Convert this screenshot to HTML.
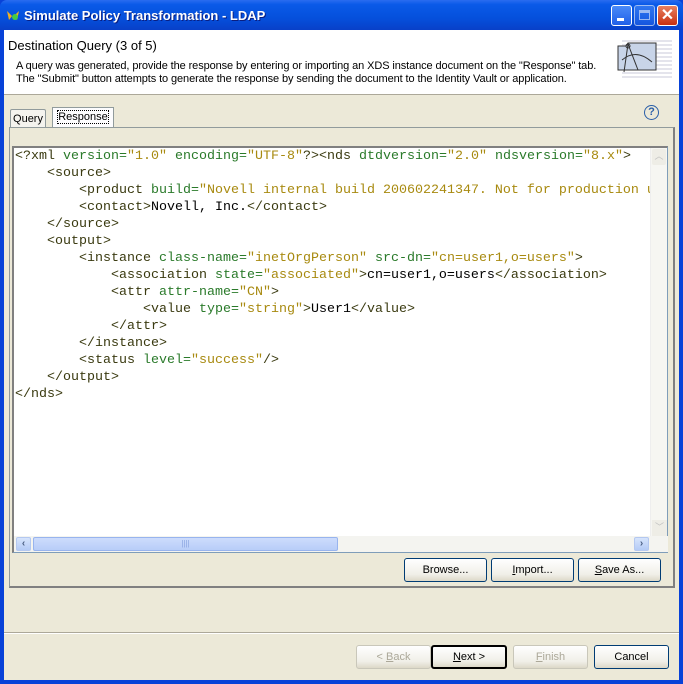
<!DOCTYPE html>
<html><head><style>
*{margin:0;padding:0;box-sizing:border-box}
body{width:683px;height:684px;overflow:hidden;background:#0842d8;font-family:"Liberation Sans",sans-serif;font-size:11px;position:relative}
.abs{position:absolute}
#title{left:0;top:0;width:683px;height:30px;background:linear-gradient(#2a6cf0 0%,#0a5ae8 15%,#0550dc 60%,#0840c8 100%);border-radius:7px 7px 0 0}
#title span{position:absolute;left:24px;top:8px;color:#fff;font-weight:bold;font-size:13px;text-shadow:1px 1px #0a1e80}
.wb{position:absolute;top:5px;width:21px;height:21px;border:1px solid #fff;border-radius:3px;background:linear-gradient(#4a8af8,#2060e8)}
#client{left:4px;top:30px;width:675px;height:650px;background:#ece9d8}
#hdr{left:0;top:0;width:675px;height:65px;background:#fff;border-bottom:1px solid #aca899}
.btn{position:absolute;height:24px;border:1px solid #003c74;border-radius:3px;background:linear-gradient(#fff,#f0efe8 70%,#dcd8c8);text-align:center;line-height:22px;font-size:11px;color:#000}
.dis{color:#aca899;border-color:#c9c7ba}
#ed{left:8px;top:116px;width:656px;height:407px;background:#fff;border:1px solid #7f9db9;border-left:2px solid #808080;border-top:2px solid #808080}
pre{position:absolute;left:1px;top:0px;font-family:"Liberation Mono",monospace;font-size:13.33px;line-height:17px;color:#000;white-space:pre}
.t{color:#3a3a10}.a{color:#2a7a2a}.v{color:#a88a10}
</style></head><body>
<div id="title" class="abs">
<svg class="abs" style="left:6px;top:9px" width="14" height="12"><path d="M1 2 L6 7 L3 11 Z" fill="#f0b020"/><path d="M13 2 L8 7 L11 11Z" fill="#f0b020"/><circle cx="9" cy="8" r="3" fill="#4c4"/></svg>
<span>Simulate Policy Transformation - LDAP</span>
<div class="wb" style="left:611px"><div style="position:absolute;left:5px;top:12px;width:7px;height:3px;background:#fff"></div></div>
<div class="wb" style="left:634px;opacity:.6"><div style="position:absolute;left:4px;top:4px;width:11px;height:10px;border:1px solid #fff;border-top-width:3px"></div></div>
<div class="wb" style="left:657px;background:linear-gradient(#e88060,#c83010);color:#fff;font-size:16px;font-weight:bold;text-align:center;line-height:19px">✕</div>
</div>
<div id="client" class="abs">
<div id="hdr" class="abs">
<div class="abs" style="left:4px;top:8px;font-size:13px;color:#000">Destination Query (3 of 5)</div>
<div class="abs" style="left:12px;top:30px;font-size:11px;line-height:13px;color:#000;letter-spacing:-0.1px">A query was generated, provide the response by entering or importing an XDS instance document on the "Response" tab.<br>The "Submit" button attempts to generate the response by sending the document to the Identity Vault or application.</div>
<div class="abs" style="left:618px;top:8px;width:50px;height:40px;background:repeating-linear-gradient(#fff 0 2px,#e4e4ec 2px 4px)"></div>
<svg class="abs" style="left:612px;top:10px" width="44" height="36"><path d="M2 6 L10 6 L12 3 L40 3 L40 30 L2 30 Z" fill="#c8d4e8" stroke="#333"/><path d="M12 4 L8 32 M12 4 L22 30 M6 20 Q20 8 36 22" stroke="#333" fill="none"/><circle cx="12" cy="6" r="2" fill="none" stroke="#333"/></svg>
</div>
<div class="abs" style="left:6px;top:79px;width:36px;height:18px;border:1px solid #919b9c;border-bottom:none;border-radius:2px 2px 0 0;background:#f4f3ee;text-align:center;line-height:19px">Query</div>
<div class="abs" style="left:48px;top:77px;width:62px;height:20px;border:1px solid #919b9c;border-bottom:none;background:#fcfcfe;text-align:center;line-height:18px"><span style="outline:1px dotted #000">Response</span></div>
<div class="abs" style="left:640px;top:75px;width:15px;height:15px;border:1.5px solid #2a5fa8;border-radius:50%;color:#2a5fa8;font-size:11px;font-weight:bold;text-align:center;line-height:12px">?</div>
<div class="abs" style="left:5px;top:97px;width:666px;height:461px;border:1px solid #919b9c;border-right:2px solid #808080;border-bottom:2px solid #808080;background:#ece9d8"></div>
<div id="ed" class="abs">
<pre><span class="t">&lt;?xml</span> <span class="a">version=</span><span class="v">"1.0"</span> <span class="a">encoding=</span><span class="v">"UTF-8"</span><span class="t">?&gt;&lt;nds</span> <span class="a">dtdversion=</span><span class="v">"2.0"</span> <span class="a">ndsversion=</span><span class="v">"8.x"</span><span class="t">&gt;</span>
    <span class="t">&lt;source&gt;</span>
        <span class="t">&lt;product</span> <span class="a">build=</span><span class="v">"Novell internal build 200602241347. Not for production u</span>
        <span class="t">&lt;contact&gt;</span>Novell, Inc.<span class="t">&lt;/contact&gt;</span>
    <span class="t">&lt;/source&gt;</span>
    <span class="t">&lt;output&gt;</span>
        <span class="t">&lt;instance</span> <span class="a">class-name=</span><span class="v">"inetOrgPerson"</span> <span class="a">src-dn=</span><span class="v">"cn=user1,o=users"</span><span class="t">&gt;</span>
            <span class="t">&lt;association</span> <span class="a">state=</span><span class="v">"associated"</span><span class="t">&gt;</span>cn=user1,o=users<span class="t">&lt;/association&gt;</span>
            <span class="t">&lt;attr</span> <span class="a">attr-name=</span><span class="v">"CN"</span><span class="t">&gt;</span>
                <span class="t">&lt;value</span> <span class="a">type=</span><span class="v">"string"</span><span class="t">&gt;</span>User1<span class="t">&lt;/value&gt;</span>
            <span class="t">&lt;/attr&gt;</span>
        <span class="t">&lt;/instance&gt;</span>
        <span class="t">&lt;status</span> <span class="a">level=</span><span class="v">"success"</span><span class="t">/&gt;</span>
    <span class="t">&lt;/output&gt;</span>
<span class="t">&lt;/nds&gt;</span></pre>
<div class="abs" style="right:0;top:0;width:17px;height:389px;background:#f6f6f2;border-left:1px solid #eee"><div style="margin:1px;height:16px;background:#eeede6;border-radius:2px;color:#c0c0c0;font-size:9px;text-align:center">︿</div><div style="position:absolute;bottom:1px;left:1px;width:15px;height:16px;background:#eeede6;color:#c0c0c0;font-size:9px;text-align:center">﹀</div></div>
<div class="abs" style="left:0;bottom:0;width:654px;height:16px;background:#f4f4f0">
<div class="abs" style="left:2px;top:1px;width:15px;height:14px;background:linear-gradient(#d6e4fc,#b4cbf6);border:1px solid #b4c8f0;border-radius:2px;color:#4d6185;font-weight:bold;font-size:10px;text-align:center;line-height:12px">‹</div>
<div class="abs" style="left:19px;top:1px;width:305px;height:14px;background:linear-gradient(#cddcfc,#b8cdf8);border:1px solid #98b4ee;border-radius:2px;color:#8aa4e0;font-size:8px;text-align:center;line-height:12px">||||</div>
<div class="abs" style="left:620px;top:1px;width:15px;height:14px;background:linear-gradient(#d6e4fc,#b4cbf6);border:1px solid #b4c8f0;border-radius:2px;color:#4d6185;font-weight:bold;font-size:10px;text-align:center;line-height:12px">›</div>
</div>
</div>
<div class="btn" style="left:400px;top:528px;width:83px">Browse...</div>
<div class="btn" style="left:487px;top:528px;width:83px"><u>I</u>mport...</div>
<div class="btn" style="left:574px;top:528px;width:83px"><u>S</u>ave As...</div>
<div class="abs" style="left:0;top:602px;width:675px;height:2px;border-top:1px solid #aca899;border-bottom:1px solid #fff"></div>
<div class="btn dis" style="left:352px;top:615px;width:75px">&lt; <u>B</u>ack</div>
<div class="btn" style="left:427px;top:615px;width:76px;border:2px solid #000;line-height:20px"><u>N</u>ext &gt;</div>
<div class="btn dis" style="left:509px;top:615px;width:75px"><u>F</u>inish</div>
<div class="btn" style="left:590px;top:615px;width:75px">Cancel</div>
</div>
</body></html>
